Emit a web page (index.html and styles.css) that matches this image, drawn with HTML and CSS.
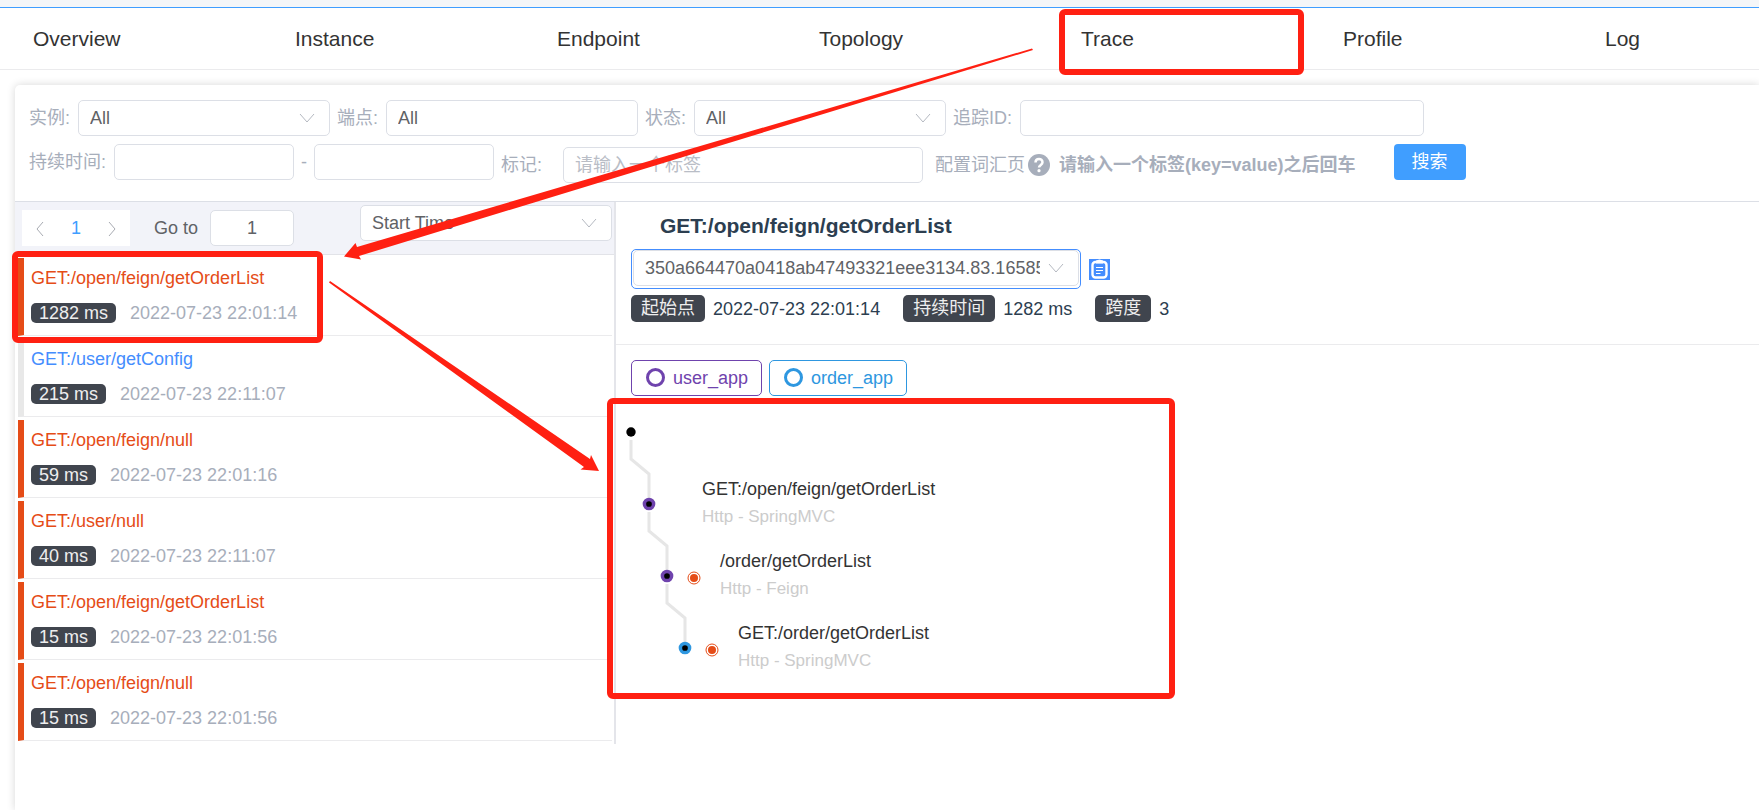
FILE: index.html
```html
<!DOCTYPE html>
<html lang="zh">
<head>
  <meta charset="UTF-8">
  <meta name="viewport" content="width=device-width, initial-scale=1.0">
  <title>Trace</title>
  <link rel="stylesheet" href="styles.css">
</head>
<body>
  <nav class="tabs">
    <a href="#overview">Overview</a>
    <a href="#instance">Instance</a>
    <a href="#endpoint">Endpoint</a>
    <a href="#topology">Topology</a>
    <a href="#trace">Trace</a>
    <a href="#profile">Profile</a>
    <a href="#log">Log</a>
  </nav>

  <main class="card">
    <form class="filters">
      <div class="filter-row">
        <label for="instance">实例:</label>
        <select id="instance" class="field w-md"><option>All</option></select>
        <label for="endpoint">端点:</label>
        <input id="endpoint" class="field w-md" type="text" value="All">
        <label for="status">状态:</label>
        <select id="status" class="field w-md"><option>All</option></select>
        <label for="trace-id">追踪ID:</label>
        <input id="trace-id" class="field w-lg" type="text">
      </div>
      <div class="filter-row">
        <label for="min">持续时间:</label>
        <input id="min" class="field w-sm" type="text">
        <span>-</span>
        <input id="max" class="field w-sm" type="text" aria-label="max">
        <div class="tags">
          <label for="tag">标记:</label>
          <input id="tag" class="field" type="text" placeholder="请输入一个标签">
          <a class="vocab" href="#tags">配置词汇页
            <svg width="24" height="24" viewBox="0 0 24 24"><circle cx="12" cy="12" r="11" fill="#a7aebb"/><path d="M8.500 9.500C8.500 4.800 15.500 4.800 15.500 9.300C15.500 12 12 11.800 12 14.600" fill="none" stroke="#fff" stroke-width="2.500"/><circle cx="12" cy="17.700" r="1.600" fill="#fff"/></svg>
          </a>
          <b>请输入一个标签(key=value)之后回车</b>
        </div>
        <button class="search" type="button">搜索</button>
      </div>
    </form>

    <div class="content">
      <section class="list">
        <div class="list-tools">
          <div class="pager">
            <button type="button" aria-label="prev"><svg width="10" height="16" viewBox="0 0 10 16"><path d="M8 1L2 8L8 15"/></svg></button>
            <button type="button" class="current">1</button>
            <button type="button" aria-label="next"><svg width="10" height="16" viewBox="0 0 10 16"><path d="M2 1L8 8L2 15"/></svg></button>
          </div>
          <label for="page">Go to</label>
          <input id="page" class="field page" type="text" value="1">
          <select class="field w-md sort" aria-label="sort"><option>Start Time</option></select>
        </div>
        <ul class="traces">
          <li class="error"><a href="#t1">GET:/open/feign/getOrderList</a><p><span class="tag">1282 ms</span>2022-07-23 22:01:14</p></li>
          <li><a href="#t2">GET:/user/getConfig</a><p><span class="tag">215 ms</span>2022-07-23 22:11:07</p></li>
          <li class="error"><a href="#t3">GET:/open/feign/null</a><p><span class="tag">59 ms</span>2022-07-23 22:01:16</p></li>
          <li class="error"><a href="#t4">GET:/user/null</a><p><span class="tag">40 ms</span>2022-07-23 22:11:07</p></li>
          <li class="error"><a href="#t5">GET:/open/feign/getOrderList</a><p><span class="tag">15 ms</span>2022-07-23 22:01:56</p></li>
          <li class="error"><a href="#t6">GET:/open/feign/null</a><p><span class="tag">15 ms</span>2022-07-23 22:01:56</p></li>
        </ul>
      </section>

      <section class="detail">
        <header>
          <h2>GET:/open/feign/getOrderList</h2>
          <div class="ids">
            <span class="id-box"><select class="field" aria-label="trace id"><option>350a664470a0418ab47493321eee3134.83.16585848741230001</option></select></span>
            <button type="button" class="copy" aria-label="copy">
              <svg width="21" height="21" viewBox="0 0 21 21"><path d="M0 0H21V21H0Z" fill="#448dfe"/><rect x="3.500" y="3" width="14" height="15.500" rx="3" fill="none" stroke="#fff" stroke-width="2.400"/><path d="M7 1.500L10.500 0.500L14 1.500V4.500H7Z" fill="#fff"/><path d="M7 8.500H14M7 11.500H14M7 14.500H11.500" stroke="#fff" stroke-width="1.200"/></svg>
            </button>
          </div>
          <div class="facts">
            <span class="tag">起始点</span><span>2022-07-23 22:01:14</span>
            <span class="tag">持续时间</span><span>1282 ms</span>
            <span class="tag">跨度</span><span>3</span>
          </div>
        </header>
        <div class="services">
          <button type="button" class="user"><i></i>user_app</button>
          <button type="button" class="order"><i></i>order_app</button>
        </div>
        <svg class="tree" width="560" height="290" viewBox="0 0 560 290">
          <g fill="none" stroke="#e6e6e6" stroke-width="3">
            <path d="M15 43V62L33 77V101"/>
            <path d="M33 115V134L51 149V173"/>
            <path d="M51 187V206L69 221V245"/>
          </g>
          <circle cx="15" cy="35" r="4.700"/>
          <g stroke-width="3.500">
            <circle cx="33" cy="107" r="4.600" stroke="#6f43ad"/>
            <circle cx="51" cy="179" r="4.600" stroke="#6f43ad"/>
            <circle cx="69" cy="251" r="4.600" stroke="#2e97e0"/>
          </g>
          <g fill="none" stroke="#e54c17">
            <circle cx="78" cy="181" r="6"/>
            <circle cx="96" cy="253" r="6"/>
          </g>
          <g fill="#e54c17">
            <circle cx="78" cy="181" r="4"/>
            <circle cx="96" cy="253" r="4"/>
          </g>
          <g class="name">
            <text x="86" y="98">GET:/open/feign/getOrderList</text>
            <text x="104" y="170">/order/getOrderList</text>
            <text x="122" y="242">GET:/order/getOrderList</text>
          </g>
          <g class="kind">
            <text x="86" y="125">Http - SpringMVC</text>
            <text x="104" y="197">Http - Feign</text>
            <text x="122" y="269">Http - SpringMVC</text>
          </g>
        </svg>
      </section>
    </div>
  </main>

  <svg class="marks" width="1759" height="810" viewBox="0 0 1759 810">
    <g fill="none" stroke="#ff2012" stroke-width="6">
      <rect x="1062" y="12" width="239" height="60" rx="3"/>
      <rect x="15" y="254" width="305" height="86" rx="3"/>
      <rect x="610" y="401" width="562" height="295" rx="3"/>
    </g>
    <g fill="#ff2012">
      <path d="M1032 48.500L357 247L355.500 243L344 256.500L361 259.500L359 256L1033 50Z"/>
      <path d="M330 281L590 459L591 455L599 471L580.500 469.500L584 467L329 282.500Z"/>
    </g>
  </svg>
</body>
</html>
```
FILE: styles.css
```css
* { box-sizing: border-box; }
body { margin: 0; min-height: 100vh; display: flex; flex-direction: column; overflow: hidden; border-top: 7px solid #f4f6f8; background: #fff; color: #2c3e50; font: 18px/24px "Liberation Sans", Arial, "Noto Sans CJK SC", sans-serif; }
button, input, select { font: inherit; color: inherit; }
button { padding: 0; border: 0; background: none; cursor: pointer; }

.tabs { display: flex; border-top: 1px solid #409eff; border-bottom: 1px solid #ebebed; overflow: hidden; }
.tabs a { flex: 0 0 262px; padding-left: 33px; line-height: 61px; font-size: 21px; color: #333; text-decoration: none; }

.card { flex: 1; margin: 15px 0 0 15px; border-radius: 5px 0 0 0; box-shadow: 0 0 8px rgba(0, 0, 0, 0.16); background: #fff; }

.filters { padding: 15px 14px 21px; border-bottom: 1px solid #dcdfe6; color: #a7aebb; }
.filter-row { display: flex; align-items: center; gap: 7px; height: 36px; white-space: nowrap; }
.filter-row + .filter-row { margin-top: 8px; }
.filter-row > label { margin-right: 1px; }
.field { height: 36px; padding: 0 11px; border: 1px solid #dcdfe6; border-radius: 5px; background: #fff; color: #606266; }
.field::placeholder { color: #b9bdc6; }
select.field { appearance: none; padding-right: 38px; background: #fff url("data:image/svg+xml,%3Csvg xmlns='http://www.w3.org/2000/svg' width='16' height='10'%3E%3Cpath d='M1 1L8 9L15 1' fill='none' stroke='%23b4b8c0'/%3E%3C/svg%3E") no-repeat right 14px center; }
.w-sm { width: 180px; }
.w-md { width: 252px; }
.w-lg { width: 404px; }
.tags { display: flex; align-items: center; padding-top: 6px; }
.tags .field { width: 360px; margin: 0 12px 0 21px; }
.vocab { display: flex; align-items: center; gap: 2px; margin-right: 8px; color: inherit; text-decoration: none; }
.search { width: 72px; height: 36px; margin-left: 31px; border-radius: 4px; background: #409eff; color: #fff; }

.content { display: flex; align-items: flex-start; }
.list { flex: 0 0 601px; height: 542px; border-right: 2px solid #e4e5ea; }
.list-tools { display: flex; align-items: center; height: 53px; padding: 0 2px 0 7px; border-bottom: 1px solid #e2e3e8; background: #f2f3f9; color: #606266; }
.pager { display: flex; height: 36px; width: 108px; margin-right: 24px; background: #fff; }
.pager button { flex: 1; }
.pager svg { fill: none; stroke: #a8abb2; vertical-align: middle; }
.pager .current { color: #409eff; }
.page { width: 84px; margin-left: 12px; text-align: center; }
.sort { align-self: flex-start; margin: 3px 0 0 auto; }

.traces { margin: 3px 2px 0 3px; padding: 0; list-style: none; }
.traces li { height: 78px; margin-bottom: 3px; padding: 8px 7px; border-left: 6px solid #e8e8e8; border-bottom: 1px solid #ebebed; }
.traces .error { border-left-color: #e54c17; }
.traces a { color: #448dfe; text-decoration: none; }
.traces .error a { color: #e54c17; }
.traces p { display: flex; align-items: center; gap: 14px; margin: 11px 0 0; color: #a7aebb; }
.tag { padding: 0 8px; border-radius: 5px; background: #40454e; color: #eee; line-height: 20px; }

.detail { flex: 1; }
.detail header { height: 143px; padding: 12px 15px 0; border-bottom: 1px solid #ebebed; }
.detail h2 { margin: 0 0 11px 29px; font-size: 21px; line-height: 24px; }
.ids { display: flex; align-items: center; gap: 8px; }
.id-box { display: flex; width: 450px; padding: 0 1px 2px; border: 1px solid #448dfe; border-radius: 5px; }
.id-box .field { width: 100%; text-overflow: clip; }
.copy { height: 21px; }
.copy svg { display: block; }
.facts { display: flex; align-items: center; gap: 8px; margin-top: 6px; }
.facts .tag { padding: 0 10px; line-height: 27px; }
.facts .tag:not(:first-child) { margin-left: 15px; }
.services { display: flex; gap: 7px; padding: 15px 15px 1px; }
.services button { display: flex; align-items: center; gap: 8px; height: 36px; padding: 0 13px 1px 14px; border: 1px solid; border-radius: 5px; }
.services i { width: 19px; height: 19px; border: 3px solid; border-radius: 50%; }
.services .user { color: #6f43ad; }
.services .order { color: #2e97e0; }
.tree { display: block; }
.name { fill: #333; }
.kind { fill: #ccc; font-size: 17px; }

.marks { position: absolute; top: 0; left: 0; pointer-events: none; }
```
